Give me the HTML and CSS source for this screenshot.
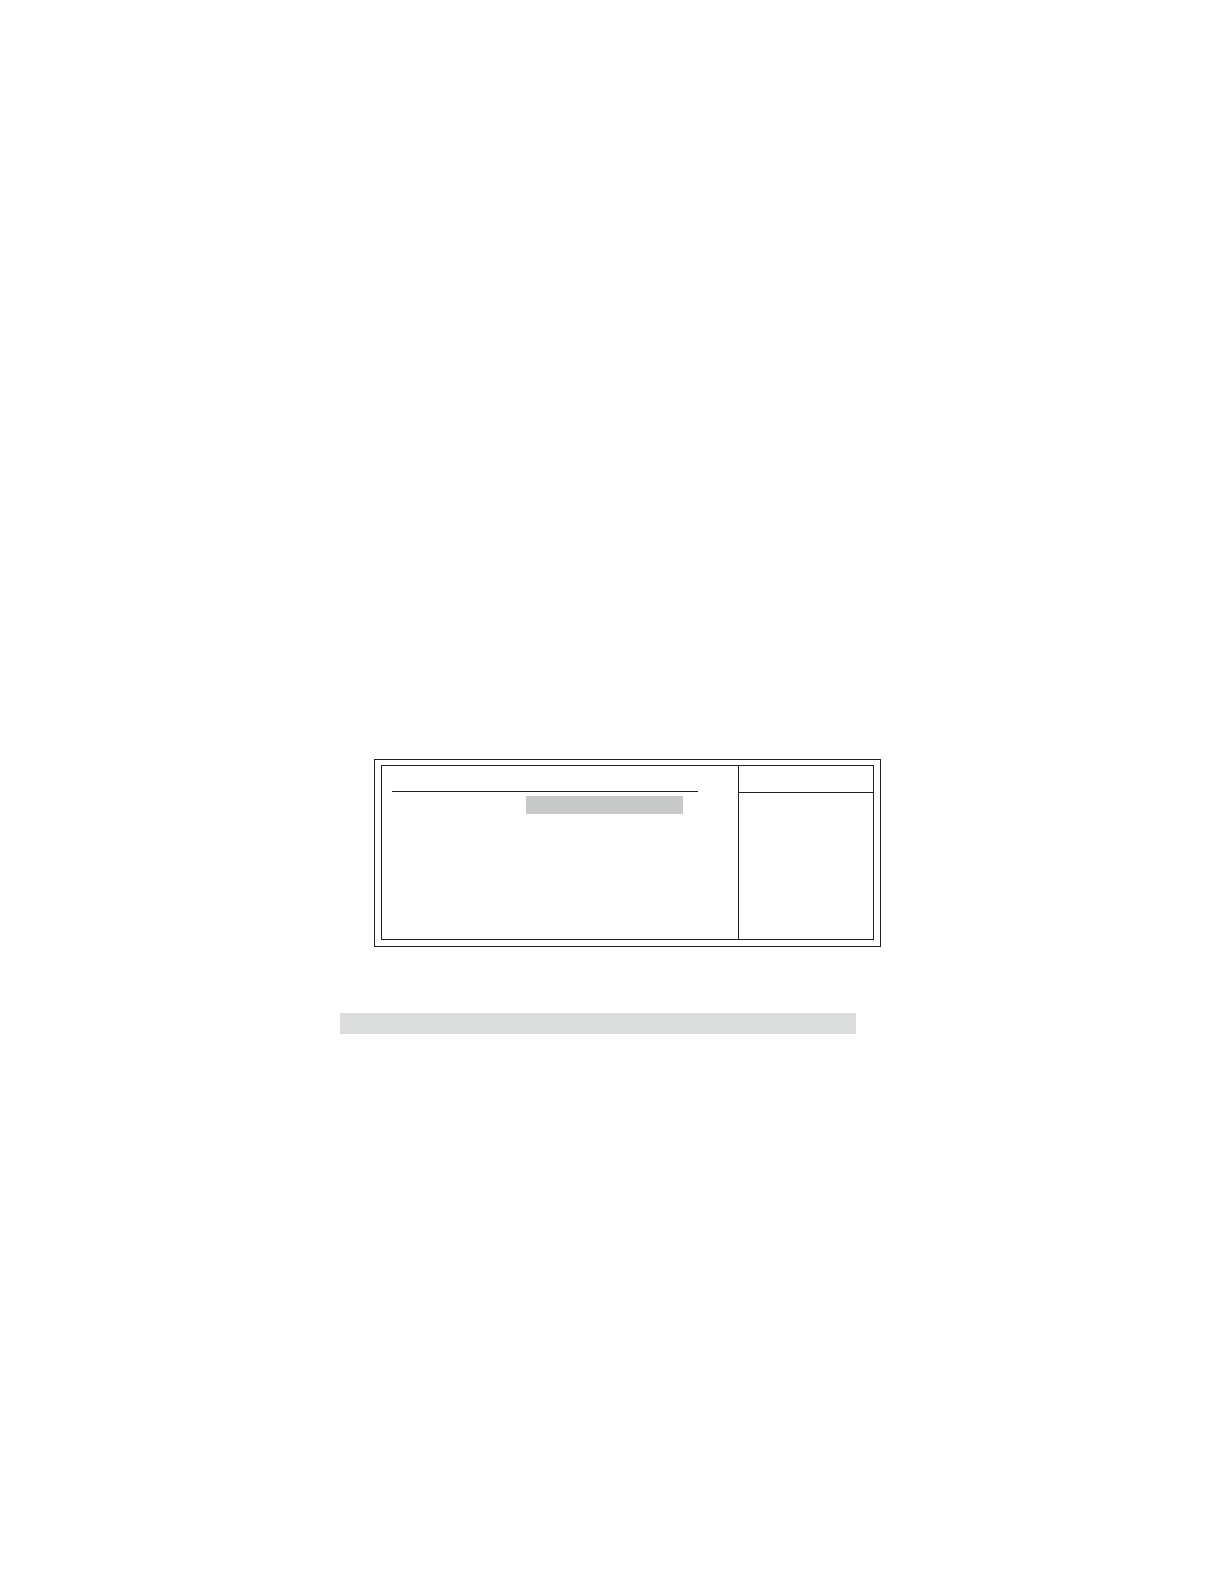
FILE: index.html
```html
<!DOCTYPE html>
<html lang="en">
<head>
<meta charset="UTF-8">
<meta name="viewport" content="width=device-width, initial-scale=1.0">
<title>Setup</title>
<link rel="stylesheet" href="styles.css">
</head>
<body>

<main class="page">
	<section class="frame">
		<div class="panel">
			<div class="settings">
				<div class="settings-head"></div>
				<div class="selected"></div>
			</div>
			<aside class="help">
				<div class="help-head"></div>
			</aside>
		</div>
	</section>
	<div class="bar"></div>
</main>

</body>
</html>
```

FILE: styles.css
```css
* {
	margin: 0;
	padding: 0;
	box-sizing: border-box;
}
body {
	background: #fff;
	font-family: "Liberation Sans", sans-serif;
}
.page {
	padding: 759px 368px 80px 340px;
}
/* double outline */
.frame {
	margin: 0 -25px 0 34px;
	padding: 5px 6px 6px;
	border: 1px solid #231f20;
}
.panel {
	display: grid;
	grid-template-columns: 1fr 135px;
	min-height: 175px;
	border: 1px solid #231f20;
}
.settings {
	padding: 0 40px 0 10px;
}
.settings-head {
	height: 26px;
	border-bottom: 1px solid #231f20;
}
.selected {
	height: 18px;
	margin: 4px 15px 0 134px;
	background: #c7c8c8;
}
.help {
	border-left: 1px solid #231f20;
}
.help-head {
	height: 27px;
	border-bottom: 1px solid #231f20;
}
.bar {
	height: 21px;
	margin-top: 66px;
	background: #dbdddd;
}
```
